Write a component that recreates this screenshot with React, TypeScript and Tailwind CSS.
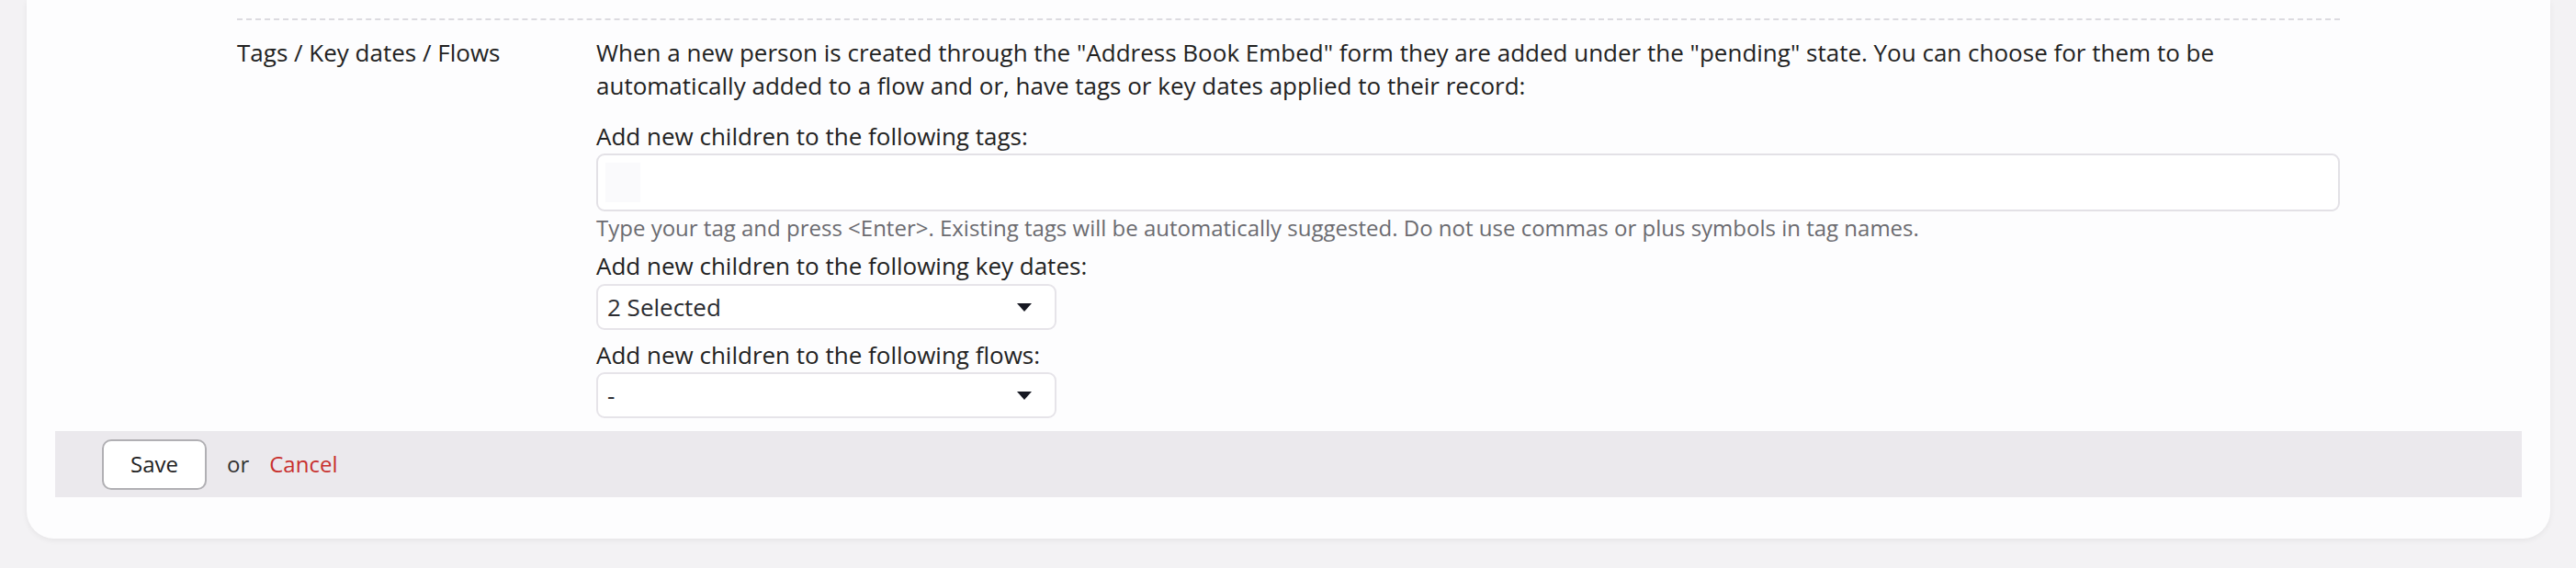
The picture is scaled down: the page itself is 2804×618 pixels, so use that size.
import { useState } from "react";

const font = { fontFamily: '"Open Sans", "Noto Sans", sans-serif' };

const Caret = () => (
  <svg width="16" height="9" viewBox="0 0 16 9" className="shrink-0">
    <path d="M0 0h16L8 9z" fill="#161822" />
  </svg>
);

const FakeSelect = ({ value }: { value: string }) => (
  <div className="flex h-[50px] w-[501px] items-center justify-between rounded-[9px] border-2 border-[#e6e4e9] bg-white pl-[10px] pr-[25px] text-[26px] text-[#2b2c31]">
    <span>{value}</span>
    <Caret />
  </div>
);

export default function App() {
  const [tags, setTags] = useState("");

  return (
    <div
      className="min-h-[618px] w-full bg-[#f3f2f4] pl-[29px] pr-[28px] text-[#222]"
      style={font}
    >
      <div className="rounded-b-[30px] bg-[#fdfdfe] px-[31px] pb-[45px] shadow-[0_2px_6px_rgba(0,0,0,0.06)]">
        <div className="mx-[198px] pt-[20px]">
          <div className="border-t-2 border-dashed border-[#dcdbe0] pt-[17px]">
            <div className="flex">
              <div className="w-[391px] shrink-0 text-[26px] leading-[36px] text-[#222]">
                Tags / Key dates / Flows
              </div>
              <div className="min-w-0 flex-1">
                <p className="text-[26px] leading-[36px]">
                  When a new person is created through the "Address Book Embed" form they are added
                  under the "pending" state. You can choose for them to be automatically added to a
                  flow and or, have tags or key dates applied to their record:
                </p>

                <label className="mt-[19px] block text-[26px] leading-[36px]">
                  Add new children to the following tags:
                </label>
                <div className="mt-[1px] flex h-[63px] items-center rounded-[9px] border-2 border-[#e3e1e6] bg-white px-[8px]">
                  <input
                    value={tags}
                    onChange={(e) => setTags(e.target.value)}
                    className="h-[43px] w-[38px] bg-[#fafafc] text-[26px] outline-none"
                  />
                </div>
                <p className="text-[24px] leading-[36px] text-[#6b6b70]">
                  Type your tag and press &lt;Enter&gt;. Existing tags will be automatically
                  suggested. Do not use commas or plus symbols in tag names.
                </p>

                <label className="mt-[5px] block text-[26px] leading-[36px]">
                  Add new children to the following key dates:
                </label>
                <div className="mt-[2px]">
                  <FakeSelect value="2 Selected" />
                </div>

                <label className="mt-[9px] block text-[26px] leading-[36px]">
                  Add new children to the following flows:
                </label>
                <div className="mt-[1px]">
                  <FakeSelect value="-" />
                </div>
              </div>
            </div>
          </div>
        </div>

        <div className="mt-[14px] flex h-[72px] items-center bg-[#ebe9ed] pl-[51px] text-[24px]">
          <button className="h-[55px] w-[114px] rounded-[10px] border-2 border-[#b1b0b4] bg-white text-[24px] text-[#222]">
            Save
          </button>
          <span className="ml-[22px] text-[#333]">or</span>
          <a href="#" className="ml-[22px] text-[#c8302e]">
            Cancel
          </a>
        </div>
      </div>
    </div>
  );
}
